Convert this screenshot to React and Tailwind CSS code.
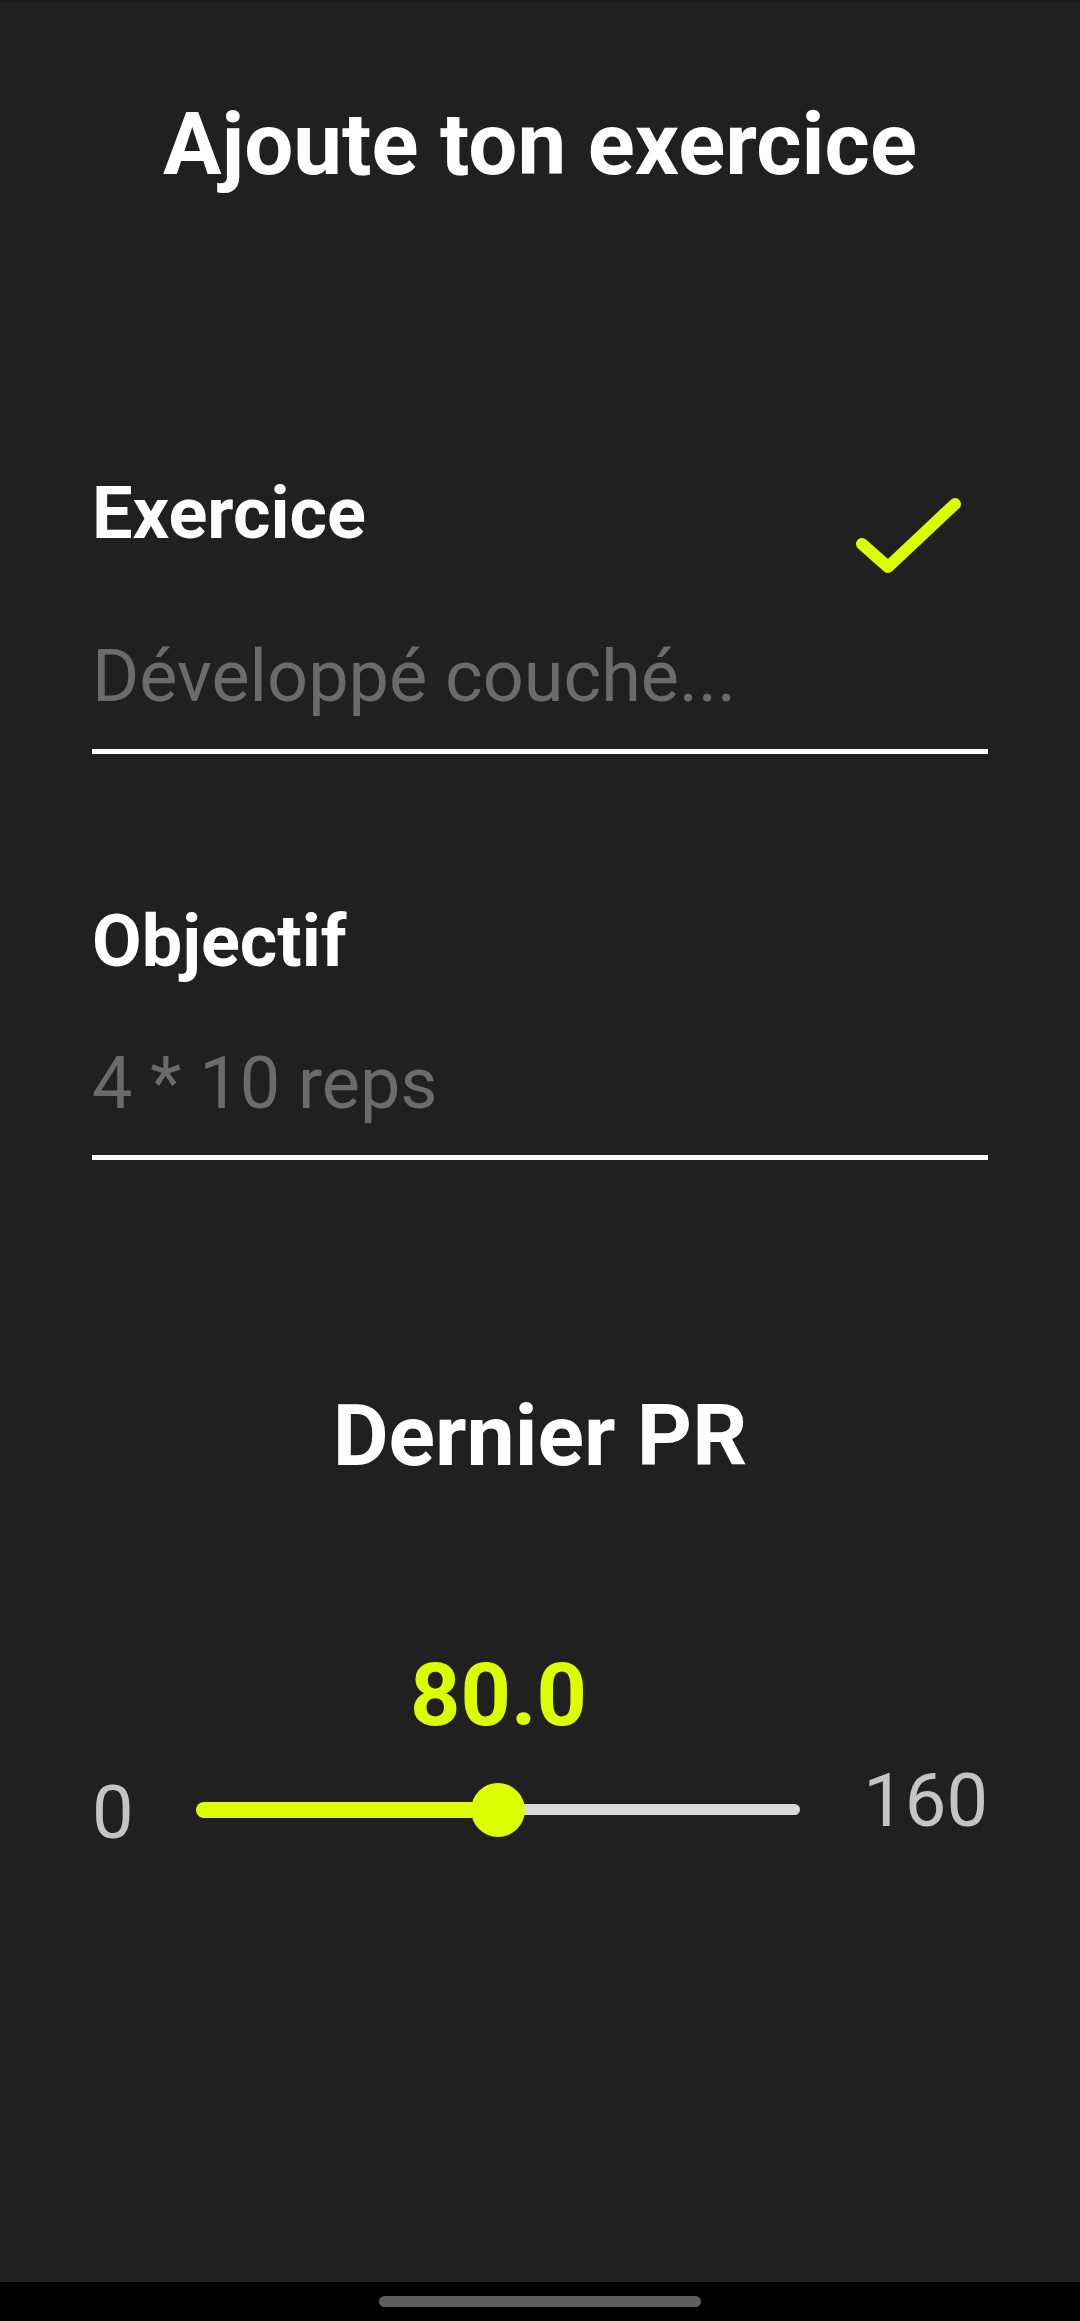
import React from 'react'

const LIME = '#dcff00'

const Field = ({ label, placeholder, icon, className }) => (
  <div className={className}>
    <div className="flex items-start justify-between">
      <span className="text-[72px] leading-none font-bold text-white">{label}</span>
      {icon}
    </div>
    <div className={icon ? 'mt-[61px]' : 'mt-[70px]'}>
      <span className="text-[72px] leading-none text-[#6b6b6b]">{placeholder}</span>
    </div>
    <div className={icon ? 'mt-[36px] h-[5px] bg-white' : 'mt-[35px] h-[5px] bg-white'} />
  </div>
)

const CheckIcon = () => (
  <svg width="110" height="85" viewBox="0 0 110 85" className="mt-[17px] mr-[26px]" fill="none">
    <polyline
      points="10,49 36,72 103,9"
      stroke={LIME}
      strokeWidth="12"
      strokeLinecap="round"
      strokeLinejoin="round"
    />
  </svg>
)

const PrSlider = ({ value, min, max }) => {
  const pct = ((value - min) / (max - min)) * 100
  return (
    <div className="mt-[172px] flex items-start justify-between">
      <span className="mt-[125px] text-[74px] leading-none text-[#c4c4c4]">{min}</span>
      <div className="w-[604px] flex flex-col">
        {/* value follows the thumb */}
        <div className="relative h-[88px]">
          <span
            className="absolute top-0 -translate-x-1/2 text-[88px] leading-none font-bold text-[#dcff00]"
            style={{ left: `${pct}%` }}
          >
            {value.toFixed(1)}
          </span>
        </div>
        <div className="relative mt-[44px] h-[53px] flex items-center">
          <div className="h-[16px] rounded-l-full bg-[#dcff00]" style={{ width: `${pct}%` }} />
          <div className="h-[11px] flex-1 rounded-r-full bg-[#d9d9d9]" />
          <div
            className="absolute top-0 w-[54px] h-[54px] -translate-x-1/2 rounded-full bg-[#dcff00]"
            style={{ left: `${pct}%` }}
          />
        </div>
      </div>
      <span className="mt-[113px] text-[74px] leading-none text-[#c4c4c4]">{max}</span>
    </div>
  )
}

export default function App() {
  return (
    <div className="font-['Roboto',sans-serif] bg-black w-[1080px]">
      <div className="h-[2282px] bg-[#202020] flex flex-col">
        <div className="h-[2px] bg-[#1a1a1a]" />
        <div className="flex flex-col px-[92px]">
          <h1 className="mt-[99px] text-center text-[87px] leading-none font-bold text-white">
            Ajoute ton exercice
          </h1>

          <Field
            className="mt-[290px]"
            label="Exercice"
            placeholder="Développé couché..."
            icon={<CheckIcon />}
          />

          <Field className="mt-[152px]" label="Objectif" placeholder="4 * 10 reps" />

          <h2 className="mt-[233px] text-center text-[86px] leading-none font-bold text-white">
            Dernier PR
          </h2>

          <PrSlider value={80} min={0} max={160} />
        </div>
      </div>
      <div className="h-[39px] flex justify-center">
        <div className="mt-[14px] w-[322px] h-[11px] rounded-full bg-[#5e5e5e]" />
      </div>
    </div>
  )
}
